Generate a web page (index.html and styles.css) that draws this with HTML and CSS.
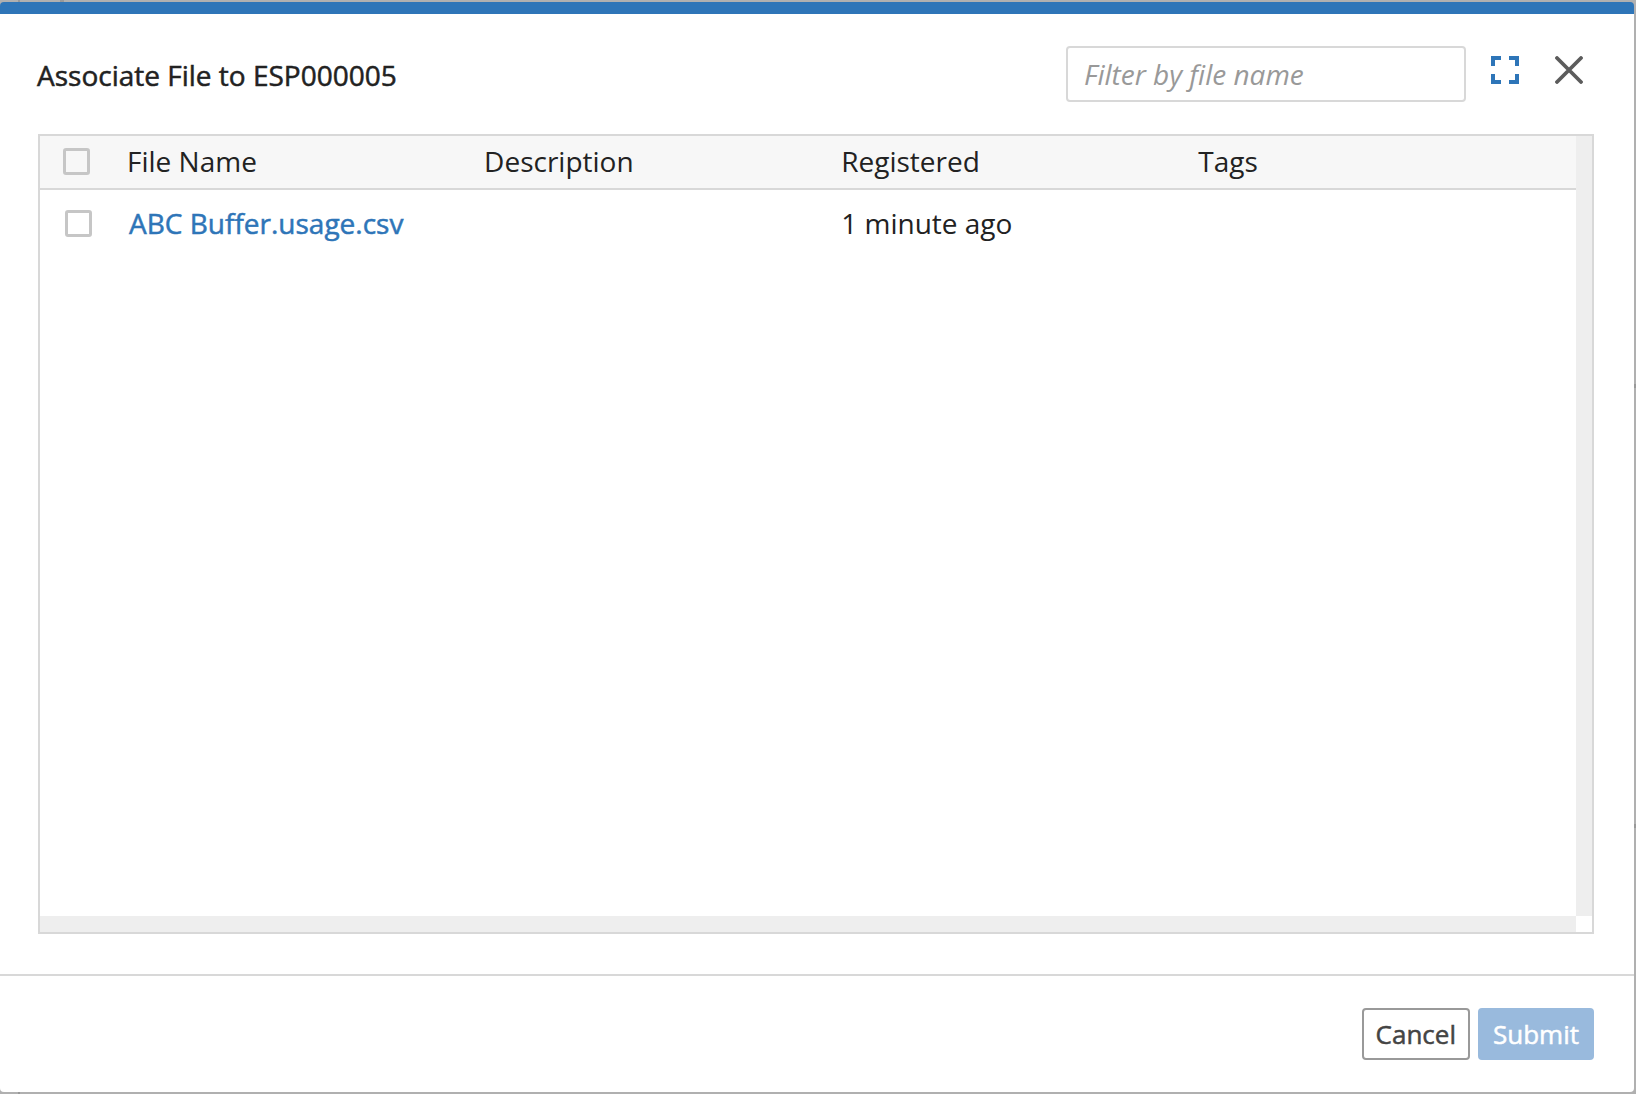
FILE: index.html
```
<!DOCTYPE html>
<html lang="en">
<head>
<meta charset="utf-8">
<meta name="viewport" content="width=device-width, initial-scale=1">
<title>Associate File</title>
<link rel="stylesheet" href="styles.css">
</head>
<body>
<div class="dialog" role="dialog" aria-labelledby="dialog-title">
  <header class="dialog-header">
    <h1 class="dialog-title" id="dialog-title">Associate File to ESP000005</h1>
    <input class="filter" type="text" placeholder="Filter by file name" aria-label="Filter by file name">
    <button class="icon-button expand" type="button" aria-label="Expand">
      <svg width="28" height="28" viewBox="0 0 28 28" fill="none" stroke="currentColor" stroke-width="4"><path d="M2 10V2h8M18 2h8v8M26 18v8h-8M10 26H2v-8"/></svg>
    </button>
    <button class="icon-button close" type="button" aria-label="Close">
      <svg width="28" height="28" viewBox="0 0 28 28" fill="none" stroke="currentColor" stroke-width="3.8" stroke-linecap="round"><path d="M2 2l24 24M26 2L2 26"/></svg>
    </button>
  </header>
  <main class="grid">
    <div class="grid-view">
      <table class="files">
        <colgroup><col class="col-check"><col class="col-data"><col class="col-data"><col class="col-data"><col></colgroup>
        <thead>
          <tr>
            <th><input class="check" type="checkbox" aria-label="Select all files"></th>
            <th scope="col">File Name</th>
            <th scope="col">Description</th>
            <th scope="col">Registered</th>
            <th scope="col">Tags</th>
          </tr>
        </thead>
        <tbody>
          <tr>
            <td><input class="check" type="checkbox" aria-label="Select ABC Buffer.usage.csv"></td>
            <td><a class="file-link" href="#">ABC Buffer.usage.csv</a></td>
            <td></td>
            <td>1 minute ago</td>
            <td></td>
          </tr>
        </tbody>
      </table>
    </div>
    <div class="track"></div>
    <div class="track"></div>
  </main>
  <footer class="dialog-footer">
    <button class="button cancel" type="button">Cancel</button>
    <button class="button submit" type="button" disabled>Submit</button>
  </footer>
</div>
</body>
</html>
```
FILE: styles.css
```
* { box-sizing: border-box; }

body {
  display: flex;
  min-height: 100vh;
  margin: 0;
  padding: 2px 2px 2px 0;
  background:
    linear-gradient(#999, #999) 18px 0 / 2px 100% no-repeat,
    linear-gradient(#999, #999) 60px 0 / 4px 2px no-repeat,
    linear-gradient(#999, #999) 100% 384px / 2px 4px no-repeat,
    linear-gradient(#999, #999) 100% 824px / 2px 4px no-repeat,
    #b0b0b0;
  font-family: "Open Sans", sans-serif;
  font-size: 28px;
  line-height: 40px;
  color: #222;
}

button, input { font: inherit; }

.dialog {
  display: flex;
  flex: 1;
  flex-direction: column;
  min-width: 0;
  border-top: 12px solid #2e75b8;
  border-radius: 4px;
  background: #fff;
}

.dialog-header {
  display: flex;
  align-items: flex-start;
  padding: 32px 51px 32px 37px;
}

.dialog-title {
  flex: 1;
  margin: 0;
  padding-top: 9px;
  font-size: 28px;
  font-weight: 400;
  -webkit-text-stroke: 0.5px;
}

.filter {
  width: 400px;
  height: 56px;
  padding: 0 16px;
  border: 2px solid #d8d8d8;
  border-radius: 4px;
  background: #fff;
  color: #222;
  font-size: 28px;
}

.filter::placeholder {
  color: #999;
  font-style: italic;
  opacity: 1;
}

.icon-button {
  display: block;
  margin-top: 10px;
  padding: 0;
  border: 0;
  background: none;
}

.icon-button svg { display: block; }
.expand { margin-left: 25px; color: #2e75b8; }
.close { margin-left: 36px; color: #5c5c5c; }

.grid {
  display: grid;
  flex: 1;
  grid-template-columns: 1fr 16px;
  grid-template-rows: 1fr 16px;
  margin: 0 40px 40px 38px;
  border: 2px solid #d8d8d8;
}

.grid-view { min-width: 0; }
.track { background: #eee; }

.files {
  width: 100%;
  border-collapse: separate;
  border-spacing: 0;
  table-layout: fixed;
  text-align: left;
}

.col-check { width: 71px; }
.col-data { width: 23.25%; }

th, td {
  padding: 0 16px 2px;
  font-weight: 400;
}

th {
  height: 54px;
  border-bottom: 2px solid #d8d8d8;
  background: #f7f7f7;
}

td { height: 68px; }
th:first-child { padding: 0 0 2px 23px; }
td:first-child { padding: 0 0 2px 25px; }

.check {
  display: block;
  width: 27px;
  height: 27px;
  margin: 0;
  border: 3px solid #c6c6c6;
  border-radius: 3px;
  appearance: none;
}

.file-link {
  padding-left: 2px;
  color: #2e75b8;
  text-decoration: none;
  -webkit-text-stroke: 0.5px;
}

.dialog-footer {
  display: flex;
  justify-content: flex-end;
  gap: 8px;
  padding: 32px 40px;
  border-top: 2px solid #d8d8d8;
}

.button {
  height: 52px;
  padding: 0 12px;
  border: 2px solid #999;
  border-radius: 4px;
  background: #fff;
  color: #444;
  font-size: 26px;
  line-height: 36px;
  -webkit-text-stroke: 0.5px;
}

.submit {
  padding: 0 13px;
  border-color: #99badd;
  background: #99badd;
  color: #fff;
}
```
